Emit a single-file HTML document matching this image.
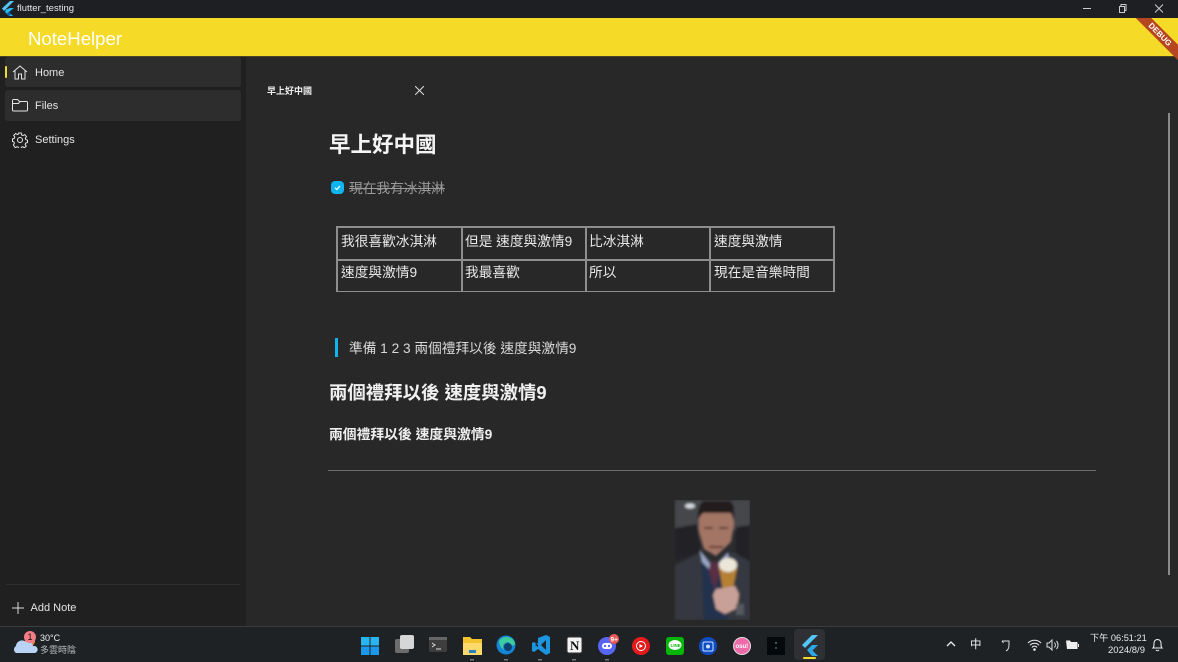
<!DOCTYPE html>
<html lang="zh-Hant"><head><meta charset="utf-8"><title>flutter_testing</title>
<style>
html,body{margin:0;padding:0;background:#282828}
#r{position:relative;width:1178px;height:662px;overflow:hidden;background:#282828;font-family:"Liberation Sans","Noto Sans CJK TC",sans-serif;color:#eee}
#r div,#r svg,#r span.a{position:absolute}
.t{white-space:nowrap;line-height:1}
.c{position:absolute;box-sizing:border-box;background:#282828;font-size:13.7px;color:#e8e8e8;padding:6px 0 0 3px;white-space:nowrap;line-height:16px}
</style></head><body><div id="r">
<div style="left:0;top:0;width:1178px;height:18px;background:#1d1f23"></div>
<svg style="left:1px;top:1px" width="14" height="15" viewBox="0 0 14 15"><path d="M9 0h4L5 8 3 10 1 7.500z" fill="#54c5f8"/><path d="M5 8.500 9 7h4L8 11l4 4H8L4 11z" fill="#29b6f6"/><path d="M6 12l2-1 2 2-2 2z" fill="#01579b"/></svg>
<div class="t" style="left:17px;top:4px;font-size:9.500px;color:#e6e6e6">flutter_testing</div>
<svg style="left:1080px;top:2px" width="90" height="14" viewBox="0 0 90 14" fill="none" stroke="#ccc" stroke-width="1"><path d="M3 6.500h8"/><rect x="39.500" y="4.500" width="5" height="6"/><path d="M41 4V2.500h5v6h-1.500"/><path d="M75 2.500l8 8m0-8-8 8"/></svg>
<div style="left:0;top:18px;width:1178px;height:38.500px;background:#f5da27;border-bottom:1px solid #4a4520;box-sizing:border-box"></div>
<div class="t" style="left:28px;top:30px;font-size:18.600px;color:#fff">NoteHelper</div>
<div style="left:1130px;top:18px;width:48px;height:42px;overflow:hidden"><div style="left:-8px;top:11px;width:76px;height:11px;background:#b5461f;transform:rotate(45deg);color:#fff;font-size:8px;font-weight:bold;text-align:center;line-height:11px">DEBUG</div></div>

<div style="left:0;top:56.500px;width:246px;height:570px;background:#202020"></div>
<div style="left:5px;top:57px;width:236px;height:30px;background:#2d2d2d;border-radius:3px"></div>
<div style="left:5px;top:90px;width:236px;height:31px;background:#2d2d2d;border-radius:3px"></div>
<div style="left:4.500px;top:66px;width:2px;height:12px;background:#f5da27;border-radius:1px"></div>
<svg style="left:12px;top:65px" width="16" height="15" viewBox="0 0 16 15" fill="none" stroke="#e4e4e4" stroke-width="1"><path d="M1 7 8 1l7 6M3 5.500V14h3.500V9h3v5H13V5.500"/></svg>
<svg style="left:12px;top:99px" width="16" height="13" viewBox="0 0 16 13" fill="none" stroke="#e4e4e4" stroke-width="1"><path d="M.5 11V1.500a1 1 0 0 1 1-1h4l2 2h7a1 1 0 0 1 1 1V11a1 1 0 0 1-1 1h-13a1 1 0 0 1-1-1zM.5 4.500h6l1.500-2"/></svg>
<svg style="left:12px;top:132px" width="16" height="16" viewBox="0 0 16 16" fill="none" stroke="#e4e4e4" stroke-width="1"><circle cx="8" cy="8" r="2.500"/><path d="M6.700 1h2.600l.4 2 1.300.6 1.800-1 1.700 2-1.200 1.600.4 1.300 1.800.7v2.300l-1.800.6-.5 1.300 1 1.700-1.900 1.700-1.600-1.100-1.300.5-.5 1.800H6.700l-.4-1.800-1.300-.5-1.700 1.100L1.400 13l1-1.700-.5-1.300L.5 9.400V7l1.800-.6.500-1.300-1.100-1.700 1.900-1.900 1.700 1 1.300-.6z"/></svg>
<div class="t" style="left:35px;top:67.500px;font-size:11px;color:#e4e4e4">Home</div>
<div class="t" style="left:35px;top:101px;font-size:11px;color:#e4e4e4">Files</div>
<div class="t" style="left:35px;top:135px;font-size:11px;color:#e4e4e4">Settings</div>
<div style="left:6px;top:584px;width:234px;height:1px;background:#2e2e2e"></div>
<svg style="left:12px;top:602px" width="12" height="12" viewBox="0 0 12 12" stroke="#ddd" stroke-width="1"><path d="M6 0v12M0 6h12"/></svg>
<div class="t" style="left:30.500px;top:603px;font-size:11px;color:#e4e4e4">Add Note</div>

<div class="t" style="left:267px;top:86.500px;font-size:9px;font-weight:bold;color:#eee">早上好中國</div>
<svg style="left:415px;top:86px" width="9" height="9" viewBox="0 0 9 9" stroke="#ddd" stroke-width="1"><path d="M0 0l9 9M9 0 0 9"/></svg>
<div style="left:1168px;top:113px;width:2px;height:462px;background:#8c8c8c"></div>

<div class="t" style="left:329px;top:134.500px;font-size:21.500px;font-weight:bold;color:#f4f4f4">早上好中國</div>
<div style="left:331px;top:181px;width:13px;height:13px;background:#0db4ee;border-radius:4px"></div>
<svg style="left:331px;top:181px" width="13" height="13" viewBox="0 0 13 13" fill="none" stroke="#fff" stroke-width="1.200"><path d="M4 6.800 5.800 8.500 9 5"/></svg>
<div class="t" style="left:349px;top:182px;font-size:13.700px;color:#9a9a9a;text-decoration:line-through">現在我有冰淇淋</div>

<div style="left:336px;top:226px;width:499px;height:66px;background:#8e8e8e"></div>
<div class="c" style="left:338px;top:228px;width:122.500px;height:30.500px">我很喜歡冰淇淋</div>
<div class="c" style="left:462.500px;top:228px;width:122px;height:30.500px;padding-left:2.500px">但是 速度與激情9</div>
<div class="c" style="left:586.500px;top:228px;width:122.500px;height:30.500px;padding-left:2.500px">比冰淇淋</div>
<div class="c" style="left:711px;top:228px;width:122px;height:30.500px">速度與激情</div>
<div class="c" style="left:338px;top:260.500px;width:122.500px;height:30px;padding-top:4px">速度與激情9</div>
<div class="c" style="left:462.500px;top:260.500px;width:122px;height:30px;padding-top:4px;padding-left:2.500px">我最喜歡</div>
<div class="c" style="left:586.500px;top:260.500px;width:122.500px;height:30px;padding-top:4px;padding-left:2.500px">所以</div>
<div class="c" style="left:711px;top:260.500px;width:122px;height:30px;padding-top:4px">現在是音樂時間</div>

<div style="left:335px;top:338px;width:3px;height:19px;background:#0db4ee"></div>
<div class="t" style="left:349px;top:342px;font-size:13.700px;color:#d8d8d8">準備 1 2 3 兩個禮拜以後 速度與激情9</div>
<div class="t" style="left:329px;top:384px;font-size:18.400px;font-weight:bold;color:#f0f0f0">兩個禮拜以後 速度與激情9</div>
<div class="t" style="left:329px;top:428px;font-size:13.800px;font-weight:bold;color:#eee">兩個禮拜以後 速度與激情9</div>
<div style="left:328px;top:470px;width:768px;height:1px;background:#6e6e6e"></div>

<svg style="left:674px;top:500px" width="76" height="120" viewBox="0 0 76 120">
<defs><filter id="b" x="-5%" y="-5%" width="110%" height="110%"><feGaussianBlur stdDeviation="1.300"/></filter></defs>
<rect x="1" width="75" height="120" fill="#2b2c30"/>
<g filter="url(#b)">
<rect x="1" y="0" width="75" height="30" fill="#45474b"/>
<ellipse cx="16" cy="6" rx="5" ry="2.500" fill="#d4d8dc"/>
<path d="M1 62V28l22-4 4 28zM76 25l-14 2v38h14z" fill="#232327"/>
<path d="M1 120V66l26-14 14 12 18-12 17 10v58z" fill="#36393f"/>
<path d="M27 54l13 22 16-22-2 66H30z" fill="#22304e"/>
<path d="M26 50l13 18 15-16 1 8-13 16-14-14z" fill="#98a6c4"/>
<path d="M36 62h9l1 8-5 20-6-18z" fill="#5a2d45"/>
<path d="M25 6h34l1 18-3 18-15 14-12-7-5-17z" fill="#a37565"/>
<path d="M23 20l2-14 4-5h28l3 6v14l-3-8-28 0z" fill="#211e1d"/>
<path d="M30 28h9M45 28h9M35 47h14" stroke="#5c3b30" stroke-width="2"/>
<path d="M45 68h18l-8 40h-3z" fill="#b58032"/>
<ellipse cx="54" cy="65" rx="9" ry="7" fill="#ece6d8"/>
<path d="M42 89l19-3 4 8-2 14-12 6-9-5-3-14z" fill="#c8a097"/>
<rect x="62" y="104" width="8" height="11" fill="#55585c"/>
</g></svg>

<div style="left:0;top:626px;width:1178px;height:36px;background:#1f2225;border-top:1px solid #3a3c3e;box-sizing:border-box"></div>
<svg style="left:14px;top:630px" width="24" height="24" viewBox="0 0 24 24"><circle cx="16" cy="11" r="5" fill="#ec8a4a"/><path d="M2 23a4 4 0 0 1 0-7 6 6 0 0 1 10-4 5 5 0 0 1 7 4 3.600 3.600 0 0 1 2 7z" fill="#b9d3f5"/><circle cx="16" cy="7" r="6" fill="#f47c86"/></svg>
<div class="t" style="left:27.500px;top:632.500px;font-size:9px;color:#111">1</div>
<div class="t" style="left:40px;top:634px;font-size:9px;color:#eee">30°C</div>
<div class="t" style="left:40px;top:646px;font-size:9px;color:#bbb">多雲時陰</div>

<svg style="left:350px;top:626px" width="480" height="36" viewBox="0 0 480 36">
<rect x="444" y="3" width="31" height="31" rx="4" fill="#2e3033"/>
<g fill="#29b4f4"><rect x="11" y="11" width="8.500" height="8.500"/><rect x="20.500" y="11" width="8.500" height="8.500"/><rect x="11" y="20.500" width="8.500" height="8.500" fill="#1a98ea"/><rect x="20.500" y="20.500" width="8.500" height="8.500" fill="#1a98ea"/></g>
<rect x="45" y="13" width="14" height="14" rx="2" fill="#6d6d6d"/><rect x="50" y="9" width="14" height="14" rx="2" fill="#d6d6d6"/>
<rect x="79" y="11" width="18" height="15" rx="2" fill="#3e3e3e"/><rect x="79" y="11" width="18" height="3" fill="#666"/><path d="M82 17l3 2-3 2M86 23h5" stroke="#ddd" fill="none"/>
<path d="M113 11h7l2 2h10v16h-19z" fill="#f4c430"/><rect x="113" y="17" width="19" height="12" fill="#fbd96a"/><rect x="119" y="24" width="7" height="3" fill="#2a7fc4"/>
<circle cx="156" cy="19" r="9.500" fill="#1485d6"/><path d="M149 15a9 9 0 0 1 16 2c0 4-7 3-6-1-3 0-8 2-5 8-3-2-5-5-5-9z" fill="#3ccb9c"/><circle cx="158" cy="21" r="4" fill="#0e3f6e"/>
<path d="M188 12l8-3 4 2v16l-4 2-8-6-4 3-2-1v-8l2-1 4 3 0 0zm0 5-3 2 3 2zm8-3-5 5 5 5z" fill="#1b95e0"/>
<rect x="217" y="11" width="15" height="16" rx="2" fill="#f4f4f4" stroke="#333"/><text x="220" y="24" font-family="Liberation Serif" font-weight="bold" font-size="13" fill="#111">N</text>
<circle cx="257" cy="20" r="9" fill="#5865f2"/><rect x="252" y="17" width="10" height="6" rx="3" fill="#fff"/><circle cx="255" cy="20" r="1.200" fill="#5865f2"/><circle cx="259" cy="20" r="1.200" fill="#5865f2"/><circle cx="264" cy="13" r="5" fill="#e85a5a"/><text x="260.500" y="15.500" font-size="6.500" font-weight="bold" fill="#fff" font-family="Liberation Sans">9+</text>
<circle cx="291" cy="20" r="9" fill="#e41b1b"/><circle cx="291" cy="20" r="4.500" fill="none" stroke="#fff"/><path d="M289.500 18l3.500 2-3.500 2z" fill="#fff"/>
<rect x="316" y="11" width="18" height="18" rx="3" fill="#06b606"/><ellipse cx="325" cy="19" rx="6.500" ry="5" fill="#fff"/><text x="320.500" y="21" font-size="4.500" font-weight="bold" fill="#06b606" font-family="Liberation Sans">LINE</text>
<circle cx="358" cy="20" r="9" fill="#0e4cc0"/><rect x="353" y="16" width="10" height="9" rx="1.500" fill="none" stroke="#cfe0ff"/><circle cx="358" cy="20.500" r="2" fill="#cfe0ff"/>
<circle cx="392" cy="20" r="8.500" fill="#ef69a8" stroke="#ddd" stroke-width="1"/><text x="385.500" y="22" font-size="6" font-weight="bold" fill="#fff" font-family="Liberation Sans">osu!</text>
<rect x="417" y="11" width="18" height="18" fill="#05090b"/><circle cx="426" cy="17" r="1" fill="#4e7a66"/><circle cx="426" cy="22" r="1" fill="#3d5d77"/>
<path d="M452 19l10-10h6L455 22z" fill="#54c5f8"/><path d="M457 24l5-5h6l-5.500 5.500 5.500 5.500h-6z" fill="#29a9ea"/>
<rect x="453" y="31" width="13" height="2" rx="1" fill="#f5da27"/>
<g fill="#777"><rect x="120" y="33" width="4" height="1.500"/><rect x="154" y="33" width="4" height="1.500"/><rect x="188" y="33" width="4" height="1.500"/><rect x="222" y="33" width="4" height="1.500"/><rect x="255" y="33" width="4" height="1.500"/></g>
</svg>

<svg style="left:946px;top:640px" width="11" height="8" viewBox="0 0 11 8" fill="none" stroke="#eee" stroke-width="1.300"><path d="M1 6l4-4 4 4"/></svg>
<div class="t" style="left:970px;top:640px;font-size:11.500px;color:#eee">中</div>
<svg style="left:1000px;top:639px" width="12" height="13" viewBox="0 0 12 13" fill="none" stroke="#ddd"><path d="M2 2h7v4c0 3-1 5-3 6M2 2l1.500 2"/></svg>
<svg style="left:1027px;top:639px" width="15" height="12" viewBox="0 0 15 12" fill="none" stroke="#eee"><path d="M1 4a9 9 0 0 1 13 0M3 6.300a6 6 0 0 1 9 0M5 8.500a3 3 0 0 1 5 0"/><circle cx="7.500" cy="10.500" r=".8" fill="#eee"/></svg>
<svg style="left:1046px;top:639px" width="14" height="12" viewBox="0 0 14 12" fill="none" stroke="#ddd"><path d="M1 4h2l3-3v10L3 8H1zM8.500 3.500a4 4 0 0 1 0 5M10.500 2a6 6 0 0 1 0 8" /></svg>
<svg style="left:1065px;top:639px" width="14" height="12" viewBox="0 0 14 12"><path d="M1 1.500h4l1 1.500h6.500v7H2z" fill="#eee"/><rect x="13" y="5" width="1" height="3" fill="#eee"/></svg>
<div class="t" style="left:1090px;top:633.500px;font-size:9.200px;color:#e8e8e8">下午 06:51:21</div>
<div class="t" style="left:1108px;top:646px;font-size:9.500px;color:#e8e8e8">2024/8/9</div>
<svg style="left:1151px;top:638px" width="13" height="14" viewBox="0 0 13 14" fill="none" stroke="#eee"><path d="M2 10c1-1 1-2 1-5a3.500 3.500 0 0 1 7 0c0 3 0 4 1 5zM5 12c1 1 2 1 3 0"/></svg>
</div></body></html>
